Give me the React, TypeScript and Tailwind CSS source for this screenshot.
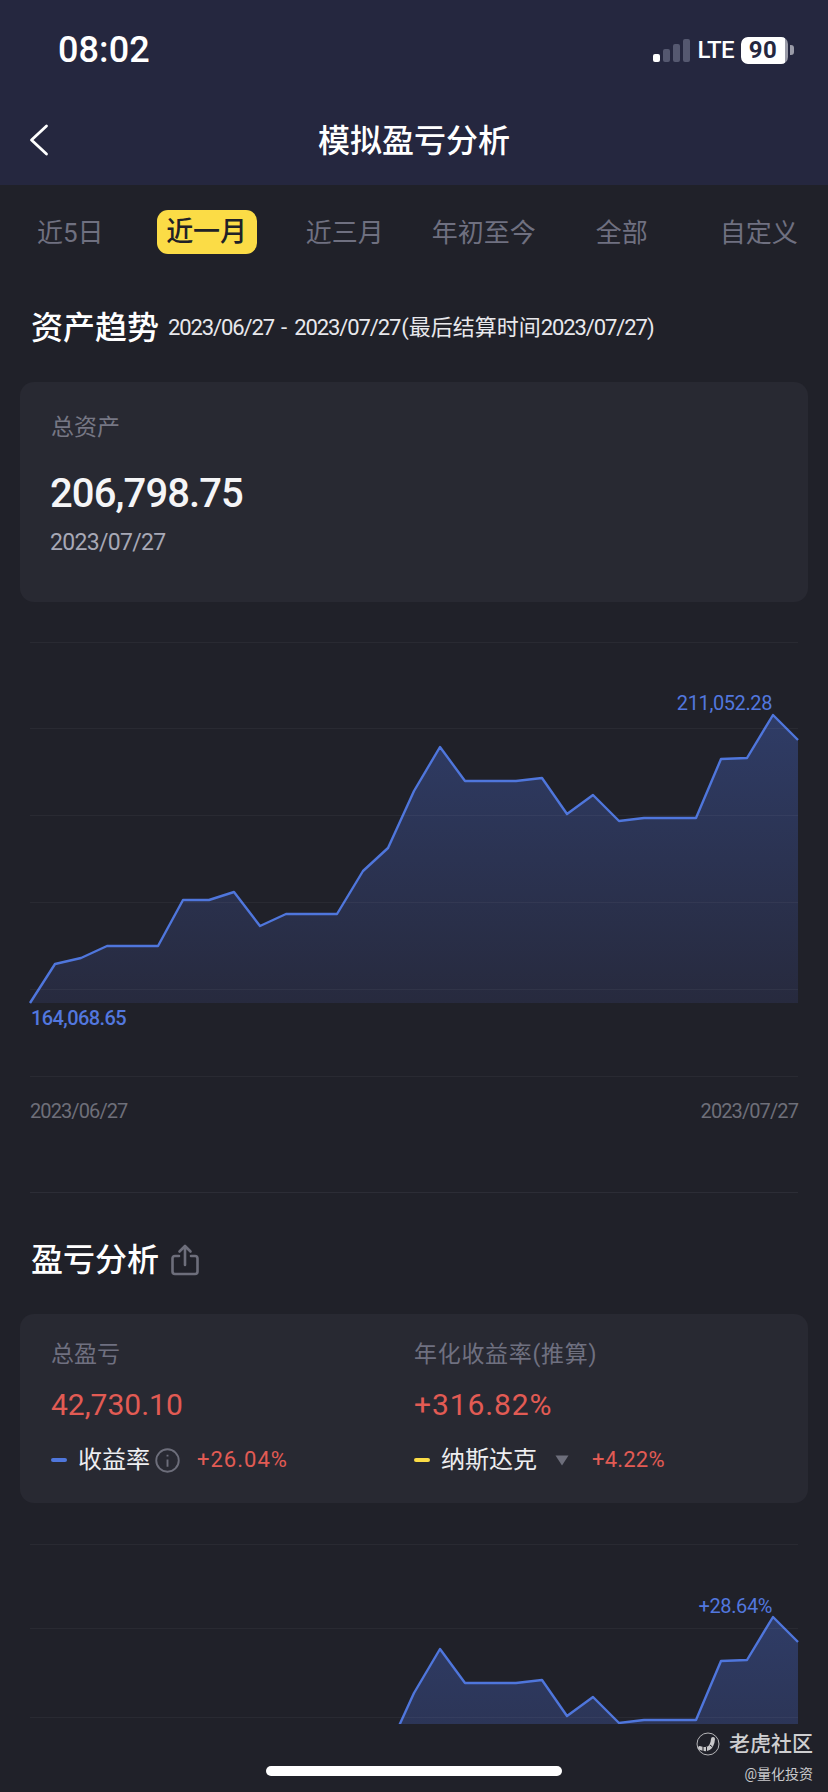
import React from "react";

const pts: [number, number][] = [
  [30, 1003], [55, 964], [81, 958], [107, 946], [132, 946], [158, 946], [183, 900], [209, 900],
  [234, 892], [260, 926], [286, 914], [312, 914], [337, 914], [363, 871], [388, 848], [414, 791],
  [440, 747], [465, 781], [491, 781], [516, 781], [542, 778], [567, 814], [593, 795], [619, 821],
  [644, 818], [670, 818], [696, 818], [721, 759], [747, 758], [773, 715], [798, 740],
];

function Area({ dy, id, base }: { dy: number; id: string; base: number }) {
  const line = pts.map(([x, y]) => `${x},${y + dy}`).join(" ");
  const area = `30,${base} ${line} 798,${base}`;
  return (
    <>
      <defs>
        <linearGradient id={id} gradientUnits="userSpaceOnUse" x1="0" y1={715 + dy} x2="0" y2={1003 + dy}>
          <stop offset="0" stopColor="#2f3c66" />
          <stop offset="1" stopColor="#272a3e" />
        </linearGradient>
      </defs>
      <polygon points={area} fill={`url(#${id})`} />
      <polyline points={line} fill="none" stroke="#4f76dc" strokeWidth="2.4" strokeLinejoin="round" />
    </>
  );
}

function Grid({ ys }: { ys: number[] }) {
  return (
    <>
      {ys.map((y) => (
        <line key={y} x1="30" x2="798" y1={y + 0.5} y2={y + 0.5} stroke="#ffffff" strokeOpacity="0.045" strokeWidth="1" />
      ))}
    </>
  );
}

function StatusBar() {
  return (
    <div className="flex h-[100px] items-center justify-between pl-[58px] pr-[34px]">
      <span className="text-[36px] font-medium leading-none tracking-[0.1px] text-white">08:02</span>
      <div className="flex items-center">
        <div className="flex h-[23px] items-end gap-[3px]">
          <div className="h-[8px] w-[7px] rounded-[2px] bg-white" />
          <div className="h-[13px] w-[7px] rounded-[2px] bg-[#555870]" />
          <div className="h-[18px] w-[7px] rounded-[2px] bg-[#555870]" />
          <div className="h-[23px] w-[7px] rounded-[2px] bg-[#555870]" />
        </div>
        <span className="ml-[8px] text-[24px] font-medium leading-none tracking-[-0.6px] text-white">LTE</span>
        <div className="ml-[7px] flex h-[27px] w-[47px] overflow-hidden rounded-[7px] bg-[#9a9ba8]">
          <div className="flex w-[44px] items-center justify-center rounded-l-[7px] bg-white text-[24px] font-bold leading-none tracking-[0.6px] text-[#25273f]">
            90
          </div>
        </div>
        <div className="ml-[2px] h-[10px] w-[4px] rounded-r-[3px] bg-[#9a9ba8]" />
      </div>
    </div>
  );
}

export default function App() {
  return (
    <div className="relative h-[1792px] w-[828px] overflow-hidden bg-[#202129] font-['Roboto','Noto_Sans_CJK_SC',sans-serif] text-white">
      <header className="h-[185px] bg-[#25273f]">
        <StatusBar />
        <div className="relative flex h-[82px] items-center justify-center">
          <svg className="absolute left-[29px] top-[24px]" width="22" height="32" viewBox="0 0 22 32" fill="none">
            <path d="M17.5 2 L2.5 16 L17.5 30" stroke="#ffffff" strokeWidth="2.8" strokeLinecap="round" strokeLinejoin="round" />
          </svg>
          <span className="text-[32px] font-medium leading-none">模拟盈亏分析</span>
        </div>
      </header>

      <div className="mt-[25px] flex h-[44px] items-center pl-[37px] text-[26px] text-[#6f7080]">
        <span className="mt-[2px]">近5日</span>
        <span className="ml-[53px] flex h-[44px] w-[100px] items-center justify-center rounded-[11px] bg-[#fbdc46] text-[27px] font-medium text-[#202127]">
          近一月
        </span>
        <span className="ml-[49px] mt-[2px]">近三月</span>
        <span className="ml-[48px] mt-[2px]">年初至今</span>
        <span className="ml-[60px] mt-[2px]">全部</span>
        <span className="ml-[72px] mt-[2px]">自定义</span>
      </div>

      <div className="mt-[52px] flex h-[44px] items-center pl-[31px]">
        <span className="text-[32px] font-medium leading-none">资产趋势</span>
        <span className="ml-[9px] text-[22px] leading-none text-[#e8e8ec]">
          <span className="tracking-[-1.1px]">2023/06/27</span>
          <span className="mx-[7px]">-</span>
          <span className="tracking-[-1.1px]">2023/07/27</span>
          <span className="ml-[1px]">(最后结算时间</span>
          <span className="tracking-[-1.1px]">2023/07/27</span>)
        </span>
      </div>

      <section className="mx-[20px] mt-[32px] h-[220px] rounded-[14px] bg-[#282932] pl-[31px]">
        <div className="pt-[33px] text-[23px] leading-[26px] text-[#767784]">总资产</div>
        <div className="-ml-px mt-[29px] text-[40px] font-medium leading-[48px] tracking-[-0.9px] text-[#f5f5f7]">206,798.75</div>
        <div className="-ml-px mt-[11px] text-[23px] leading-[28px] tracking-[-0.7px] text-[#a7a8b6]">2023/07/27</div>
      </section>

      <div className="relative mt-[28px] h-[460px]">
        <svg className="block" width="828" height="460" viewBox="0 630 828 460">
          <Area dy={0} id="a1" base={1003} />
          <Grid ys={[642, 728, 815, 902, 989, 1076]} />
        </svg>
        <span className="absolute right-[56px] top-[61px] text-[20px] leading-[24px] tracking-[-0.4px] text-[#5277de]">211,052.28</span>
        <span className="absolute left-[31px] top-[376px] text-[20px] font-medium leading-[24px] tracking-[-0.6px] text-[#5277de]">164,068.65</span>
      </div>

      <div className="flex h-[42px] items-center justify-between px-[30px] text-[20px] leading-none text-[#6e6f79]">
        <span className="tracking-[-0.9px]">2023/06/27</span>
        <span className="tracking-[-0.9px]">2023/07/27</span>
      </div>

      <div className="mx-[30px] mt-[60px] h-px bg-[#2c2d36]" />

      <div className="mt-[45px] flex h-[44px] items-center pl-[31px]">
        <span className="text-[32px] font-medium leading-none">盈亏分析</span>
        <svg className="ml-[12px]" width="28" height="32" viewBox="0 0 28 32" fill="none" stroke="#6d6e7b" strokeWidth="2.6" strokeLinecap="round" strokeLinejoin="round">
          <path d="M8 12 H4 Q1.5 12 1.5 14.5 V27.5 Q1.5 30 4 30 H24 Q26.5 30 26.5 27.5 V14.5 Q26.5 12 24 12 H20" />
          <path d="M14 21 V2 M8.5 7.5 L14 2 L19.5 7.5" />
        </svg>
      </div>

      <section className="mx-[20px] mt-[32px] grid h-[189px] grid-cols-[363px_1fr] rounded-[14px] bg-[#282932] pl-[31px]">
        <div>
          <div className="pt-[28px] text-[23px] leading-[26px] text-[#6f7080]">总盈亏</div>
          <div className="mt-[19px] text-[30px] leading-[36px] text-[#e25b54]">42,730.10</div>
          <div className="mt-[22px] flex h-[30px] items-center">
            <span className="h-[4px] w-[16px] rounded-[2px] bg-[#4f76dc]" />
            <span className="ml-[11px] text-[24px] leading-none text-[#ededf0]">收益率</span>
            <svg className="ml-[5px]" width="25" height="25" viewBox="0 0 24 24" fill="none" stroke="#6d6e7b" strokeWidth="1.8">
              <circle cx="12" cy="12" r="10.8" />
              <path d="M12 11 V18 M12 6.5 V8.2" />
            </svg>
            <span className="ml-[17px] text-[22px] leading-none tracking-[1px] text-[#e25b54]">+26.04%</span>
          </div>
        </div>
        <div>
          <div className="pt-[28px] text-[23px] leading-[26px] tracking-[0.7px] text-[#6f7080]">年化收益率(推算)</div>
          <div className="mt-[19px] text-[30px] leading-[36px] tracking-[0.9px] text-[#e25b54]">+316.82%</div>
          <div className="mt-[22px] flex h-[30px] items-center">
            <span className="h-[4px] w-[16px] rounded-[2px] bg-[#fbdc46]" />
            <span className="ml-[11px] text-[24px] leading-none text-[#ededf0]">纳斯达克</span>
            <svg className="ml-[18px]" width="14" height="11" viewBox="0 0 14 11">
              <path d="M0.5 0.5 H13.5 L7 10.5 Z" fill="#6d6e7b" />
            </svg>
            <span className="ml-[23px] text-[22px] leading-none tracking-[0.2px] text-[#e25b54]">+4.22%</span>
          </div>
        </div>
      </section>

      <div className="relative mt-[27px] h-[194px]">
        <svg className="block" width="828" height="194" viewBox="0 1530 828 194">
          <Area dy={902} id="a2" base={1724} />
          <Grid ys={[1544, 1628, 1717]} />
        </svg>
        <span className="absolute right-[56px] top-[64px] text-[20px] leading-[24px] tracking-[-0.4px] text-[#5277de]">+28.64%</span>
      </div>

      <div className="absolute right-[15px] top-[1730px] flex flex-col items-end">
        <div className="flex h-[28px] items-center">
          <svg width="24" height="24" viewBox="0 0 24 24" fill="none">
            <circle cx="12" cy="12" r="11" stroke="#b5b5b8" strokeWidth="1" />
            <path d="M4 16 Q12 19 15 14 Q17 10 17 7" stroke="#c8c8ca" strokeWidth="4" strokeLinecap="round" />
            <path d="M7 15 V19 M10.5 15 V19 M14 13 L16.5 15" stroke="#202129" strokeWidth="1" />
          </svg>
          <span className="ml-[9px] text-[21px] font-medium leading-none text-[#cfcfd1]">老虎社区</span>
        </div>
        <span className="mt-[7px] text-[14px] leading-[18px] text-[#c9c9cc]">@量化投资</span>
      </div>

      <div className="absolute left-[266px] top-[1766px] h-[10px] w-[296px] rounded-full bg-white" />
    </div>
  );
}
